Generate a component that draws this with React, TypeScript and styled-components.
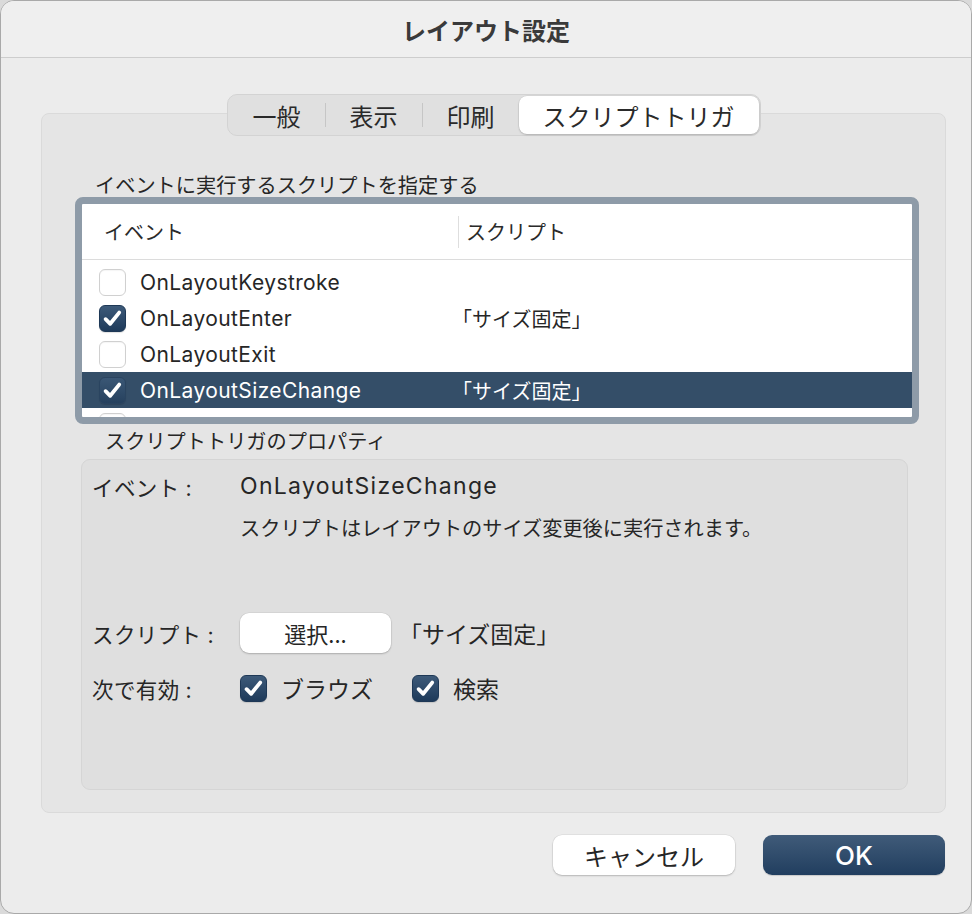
import React from "react";
import styled, { createGlobalStyle } from "styled-components";

const GlobalStyle = createGlobalStyle`
  html, body {
    margin: 0;
    padding: 0;
    background: #dadada;
  }
  body {
    font-family: "Inter", "Noto Sans CJK JP", sans-serif;
    color: #262626;
  }
  * {
    box-sizing: border-box;
  }
`;

const jp = `"Noto Sans CJK JP", sans-serif`;

const Window = styled.div`
  width: 972px;
  height: 914px;
  display: flex;
  flex-direction: column;
  background: #ececec;
  border: 1px solid #a9a9a9;
  border-radius: 14px;
  overflow: hidden;
`;

const TitleBar = styled.div`
  height: 57px;
  flex: none;
  display: flex;
  align-items: center;
  justify-content: center;
  background: #efefef;
  border-bottom: 1px solid #cdcdcd;
  font-family: ${jp};
  font-size: 24px;
  font-weight: 700;
  color: #3a3a3a;
`;

const TabPanel = styled.div`
  margin: 55px 25px 0 40px;
  height: 700px;
  display: flex;
  flex-direction: column;
  background: #e5e5e5;
  border: 1px solid #dadada;
  border-radius: 8px;
`;

const Segmented = styled.div`
  align-self: center;
  margin-top: -20px;
  height: 42px;
  display: flex;
  align-items: center;
  padding: 0 1px;
  background: #e0e0e0;
  border: 1px solid #d3d3d3;
  border-radius: 10px;
`;

const Segment = styled.div<{ $active?: boolean }>`
  height: 38px;
  display: flex;
  align-items: center;
  padding: 0 24px;
  font-family: ${jp};
  font-size: 24px;
  color: #2a2a2a;
  border-radius: 8px;
  background: ${(p) => (p.$active ? "#ffffff" : "transparent")};
  box-shadow: ${(p) =>
    p.$active ? "0 1px 2px rgba(0,0,0,0.18), 0 0 0 0.5px rgba(0,0,0,0.08)" : "none"};
`;

const SegDivider = styled.div`
  width: 1px;
  height: 24px;
  background: #c6c6c6;
`;

const SectionLabel = styled.div<{ $indent: number; $top: number }>`
  margin: ${(p) => p.$top}px 0 0 ${(p) => p.$indent}px;
  height: 24px;
  line-height: 24px;
  font-family: ${jp};
  font-size: 20.2px;
  color: #262626;
`;

const TableRing = styled.div`
  margin: 0 26px 0 33px;
  height: 227px;
  border: 7px solid #8e9ba8;
  border-radius: 8px;
  background: #ffffff;
  display: flex;
  flex-direction: column;
  overflow: hidden;
`;

const TableHeader = styled.div`
  height: 56px;
  flex: none;
  display: grid;
  grid-template-columns: 376px 1fr;
  align-items: center;
  border-bottom: 1px solid #dcdcdc;
  font-family: ${jp};
  font-size: 20px;
  color: #2a2a2a;
`;

const HeaderCell = styled.div<{ $divider?: boolean }>`
  height: 32px;
  display: flex;
  align-items: center;
  padding-left: ${(p) => (p.$divider ? 7 : 22)}px;
  border-left: ${(p) => (p.$divider ? "1px solid #dedede" : "none")};
`;

const RowList = styled.div`
  flex: 1;
  padding-top: 4px;
  overflow: hidden;
`;

const Row = styled.div<{ $selected?: boolean }>`
  height: 36px;
  display: grid;
  grid-template-columns: 370px 1fr;
  align-items: center;
  background: ${(p) => (p.$selected ? "#344e68" : "transparent")};
  color: ${(p) => (p.$selected ? "#ffffff" : "#262626")};
`;

const EventCell = styled.div`
  display: flex;
  align-items: center;
  gap: 14px;
  padding-left: 17px;
  font-size: 21px;
  letter-spacing: 0.4px;
`;

const ScriptCell = styled.div`
  font-family: ${jp};
  font-size: 20px;
`;

const Box = styled.div<{ $checked?: boolean; $onDark?: boolean }>`
  width: 27px;
  height: 27px;
  flex: none;
  border-radius: 6px;
  display: flex;
  align-items: center;
  justify-content: center;
  background: ${(p) =>
    p.$checked
      ? p.$onDark
        ? "linear-gradient(#3a5775, #26415e)"
        : "linear-gradient(#3d5a79, #1e3a5a)"
      : "#ffffff"};
  border: 1px solid
    ${(p) => (p.$checked ? (p.$onDark ? "#2a4460" : "#1e3856") : "#d0d0d0")};
  box-shadow: ${(p) =>
    p.$checked ? "0 1px 1px rgba(0,0,0,0.12)" : "inset 0 1px 1px rgba(0,0,0,0.04)"};
`;

function Checkbox({ checked, onDark }: { checked?: boolean; onDark?: boolean }) {
  return (
    <Box $checked={checked} $onDark={onDark}>
      {checked && (
        <svg width="25" height="25" viewBox="0 0 25 25">
          <path
            d="M5.6 13.2 L10.2 17.8 L19.2 6.6"
            fill="none"
            stroke="#ffffff"
            strokeWidth="3.8"
            strokeLinecap="round"
            strokeLinejoin="round"
          />
        </svg>
      )}
    </Box>
  );
}

const PropsBox = styled.div`
  margin: 6px 37px 0 39px;
  height: 331px;
  background: #dfdfdf;
  border: 1px solid #d5d5d5;
  border-radius: 9px;
  padding: 0 10px;
  display: flex;
  flex-direction: column;
`;

const PropRow = styled.div<{ $top: number; $h: number }>`
  margin-top: ${(p) => p.$top}px;
  height: ${(p) => p.$h}px;
  display: grid;
  grid-template-columns: 148px 1fr;
  align-items: center;
`;

const PropLabel = styled.div`
  font-family: ${jp};
  font-size: 21.5px;
  letter-spacing: 0.4px;
  color: #262626;
`;

const Colon = styled.span`
  font-family: "Inter", sans-serif;
  margin-left: 6px;
`;

const PropValue = styled.div`
  display: flex;
  align-items: center;
  gap: 8px;
  font-size: 23px;
  letter-spacing: 1.3px;
  color: #262626;
`;

const Description = styled.div`
  font-family: ${jp};
  font-size: 20.2px;
`;

const SelectButton = styled.button`
  width: 151px;
  height: 40px;
  border: none;
  border-radius: 9px;
  background: #ffffff;
  box-shadow: 0 1px 2px rgba(0, 0, 0, 0.2), 0 0 0 0.5px rgba(0, 0, 0, 0.08);
  font-family: ${jp};
  font-size: 22px;
  color: #262626;
  padding: 0;
`;

const ScriptName = styled.span`
  font-family: ${jp};
  font-size: 23px;
  letter-spacing: 0;
`;

const CheckGroup = styled.div`
  display: flex;
  align-items: center;
  gap: 14px;
  margin-right: 31px;
  font-family: ${jp};
  font-size: 23px;
  letter-spacing: 0;
`;

const Footer = styled.div`
  display: flex;
  justify-content: flex-end;
  gap: 28px;
  margin-top: 22px;
  padding-right: 26px;
`;

const DialogButton = styled.button<{ $primary?: boolean }>`
  width: 182px;
  height: 40px;
  border: none;
  border-radius: 9px;
  padding: 0;
  font-family: ${(p) => (p.$primary ? `"Inter", sans-serif` : jp)};
  font-size: ${(p) => (p.$primary ? 26 : 24)}px;
  font-weight: ${(p) => (p.$primary ? 500 : 400)};
  color: ${(p) => (p.$primary ? "#ffffff" : "#262626")};
  background: ${(p) => (p.$primary ? "linear-gradient(#405b79, #213e5f)" : "#ffffff")};
  box-shadow: ${(p) =>
    p.$primary
      ? "0 1px 1px rgba(0,0,0,0.15)"
      : "0 1px 2px rgba(0,0,0,0.2), 0 0 0 0.5px rgba(0,0,0,0.08)"};
`;

const events = [
  { name: "OnLayoutKeystroke", checked: false, script: "" },
  { name: "OnLayoutEnter", checked: true, script: "「サイズ固定」" },
  { name: "OnLayoutExit", checked: false, script: "" },
  { name: "OnLayoutSizeChange", checked: true, script: "「サイズ固定」", selected: true },
  { name: "", checked: false, script: "" },
];

export default function App() {
  return (
    <>
      <GlobalStyle />
      <Window>
        <TitleBar>レイアウト設定</TitleBar>
        <TabPanel>
          <Segmented>
            <Segment>一般</Segment>
            <SegDivider />
            <Segment>表示</Segment>
            <SegDivider />
            <Segment>印刷</Segment>
            <Segment $active>スクリプトトリガ</Segment>
          </Segmented>

          <SectionLabel $indent={53} $top={37}>
            イベントに実行するスクリプトを指定する
          </SectionLabel>
          <TableRing>
            <TableHeader>
              <HeaderCell>イベント</HeaderCell>
              <HeaderCell $divider>スクリプト</HeaderCell>
            </TableHeader>
            <RowList>
              {events.map((e, i) => (
                <Row key={i} $selected={e.selected}>
                  <EventCell>
                    <Checkbox checked={e.checked} onDark={e.selected} />
                    {e.name}
                  </EventCell>
                  <ScriptCell>{e.script}</ScriptCell>
                </Row>
              ))}
            </RowList>
          </TableRing>

          <SectionLabel $indent={63} $top={5}>
            スクリプトトリガのプロパティ
          </SectionLabel>
          <PropsBox>
            <PropRow $top={8} $h={36}>
              <PropLabel>
                イベント<Colon>:</Colon>
              </PropLabel>
              <PropValue>OnLayoutSizeChange</PropValue>
            </PropRow>
            <PropRow $top={9} $h={28}>
              <span />
              <Description>スクリプトはレイアウトのサイズ変更後に実行されます。</Description>
            </PropRow>
            <PropRow $top={72} $h={40}>
              <PropLabel>
                スクリプト<Colon>:</Colon>
              </PropLabel>
              <PropValue>
                <SelectButton>選択...</SelectButton>
                <ScriptName>「サイズ固定」</ScriptName>
              </PropValue>
            </PropRow>
            <PropRow $top={17} $h={36}>
              <PropLabel>
                次で有効<Colon>:</Colon>
              </PropLabel>
              <PropValue>
                <CheckGroup>
                  <Checkbox checked />
                  ブラウズ
                </CheckGroup>
                <CheckGroup>
                  <Checkbox checked />
                  検索
                </CheckGroup>
              </PropValue>
            </PropRow>
          </PropsBox>
        </TabPanel>
        <Footer>
          <DialogButton>キャンセル</DialogButton>
          <DialogButton $primary>OK</DialogButton>
        </Footer>
      </Window>
    </>
  );
}
